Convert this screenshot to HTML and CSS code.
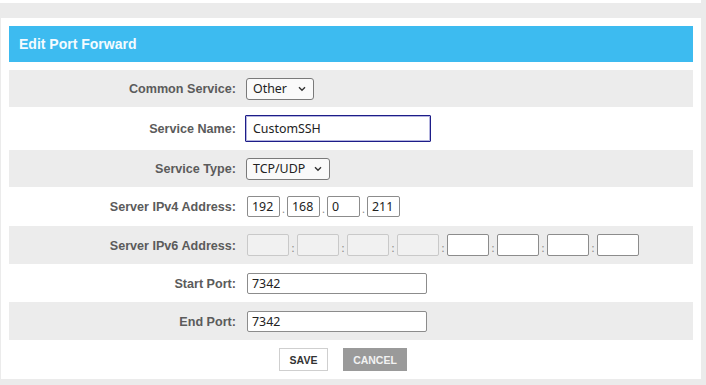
FILE: index.html
```html
<!DOCTYPE html>
<html lang="en">
<head>
<meta charset="utf-8">
<title>Edit Port Forward</title>
<link rel="stylesheet" href="styles.css">
</head>
<body>
<div class="top-card"></div>
<div class="card">
  <div class="card-header">Edit Port Forward</div>
  <div class="form">
    <div class="row gray h37">
      <div class="label">Common Service:</div>
      <div class="control">
        <div class="select w68"><span>Other</span>
          <svg class="chev" width="8" height="6" viewBox="0 0 8 6"><path d="M1 1.2 L4 4.2 L7 1.2" fill="none" stroke="#333" stroke-width="1.4"/></svg>
        </div>
      </div>
    </div>
    <div class="row h43">
      <div class="label">Service Name:</div>
      <div class="control"><input class="text focus" type="text" value="CustomSSH"></div>
    </div>
    <div class="row gray h37">
      <div class="label">Service Type:</div>
      <div class="control">
        <div class="select w83"><span>TCP/UDP</span>
          <svg class="chev" width="8" height="6" viewBox="0 0 8 6"><path d="M1 1.2 L4 4.2 L7 1.2" fill="none" stroke="#333" stroke-width="1.4"/></svg>
        </div>
      </div>
    </div>
    <div class="row h39">
      <div class="label">Server IPv4 Address:</div>
      <div class="control ip">
        <input class="oct" type="text" value="192"><span class="sep">.</span>
        <input class="oct" type="text" value="168"><span class="sep">.</span>
        <input class="oct" type="text" value="0"><span class="sep">.</span>
        <input class="oct" type="text" value="211">
      </div>
    </div>
    <div class="row gray h38">
      <div class="label">Server IPv6 Address:</div>
      <div class="control ip">
        <input class="hex" type="text" disabled><span class="sep">:</span>
        <input class="hex" type="text" disabled><span class="sep">:</span>
        <input class="hex" type="text" disabled><span class="sep">:</span>
        <input class="hex" type="text" disabled><span class="sep">:</span>
        <input class="hex" type="text"><span class="sep">:</span>
        <input class="hex" type="text"><span class="sep">:</span>
        <input class="hex" type="text"><span class="sep">:</span>
        <input class="hex" type="text">
      </div>
    </div>
    <div class="row h38">
      <div class="label">Start Port:</div>
      <div class="control"><input class="port" type="text" value="7342"></div>
    </div>
    <div class="row gray h38">
      <div class="label">End Port:</div>
      <div class="control"><input class="port" type="text" value="7342"></div>
    </div>
  </div>
  <div class="actions">
    <button class="btn save" type="button">SAVE</button>
    <button class="btn cancel" type="button">CANCEL</button>
  </div>
</div>
</body>
</html>
```
FILE: styles.css
```css
html, body {
  margin: 0;
  padding: 0;
}
body {
  background: #ebebeb;
  width: 706px;
  height: 385px;
  overflow: hidden;
  font-family: "Liberation Sans", Arial, sans-serif;
}
.top-card {
  width: 701px;
  height: 3px;
  background: #fff;
}
.card {
  margin: 15px 0 0 1px;
  width: 700px;
  box-sizing: border-box;
  background: #fff;
  padding: 8px 8px 8px 8px;
}
.card-header {
  height: 36px;
  background: #3dbbf0;
  color: #f4fbff;
  font-weight: bold;
  font-size: 14px;
  line-height: 36px;
  padding-left: 10px;
}
.form {
  margin-top: 8px;
}
.row {
  display: flex;
  align-items: center;
}
.row.gray { background: #ececec; }
.h37 { height: 37px; }
.h38 { height: 38px; }
.h39 { height: 39px; }
.h43 { height: 43px; }
.label {
  width: 227px;
  text-align: right;
  font-weight: bold;
  font-size: 12.6px;
  color: #5b5b5b;
  margin-right: 11px;
  padding-top: 1px;
}
.control {
  display: flex;
  align-items: center;
  font-family: "Noto Sans", "Open Sans", sans-serif;
  font-size: 12.4px;
  color: #222;
}
.select {
  box-sizing: border-box;
  height: 22px;
  border: 1px solid #7a7a7a;
  border-radius: 3px;
  background: #fafafa;
  display: flex;
  align-items: center;
  justify-content: space-between;
  padding: 0 7px 0 6px;
  margin-left: -1px;
}
.w68 { width: 68px; }
.w83 { width: 84px; }
.chev { display: block; }
input {
  font-family: "Noto Sans", "Open Sans", sans-serif;
  font-size: 12.4px;
  color: #222;
  box-sizing: border-box;
  margin: 0;
  outline: none;
  background: #fff;
}
.text {
  width: 186px;
  height: 27px;
  padding: 0 7px;
  margin-left: -2px;
  border: 1px solid #1d1d88;
  box-shadow: inset 0 0 0 1px rgba(40, 40, 160, 0.35);
  border-radius: 1px;
}
.oct {
  width: 33px;
  height: 21px;
  padding: 0 4px;
  border: 1px solid #8c8c8c;
  border-radius: 2px;
}
.ip .oct + .sep { width: 7px; }
.hex {
  width: 42px;
  height: 22px;
  padding: 0 4px;
  border: 1px solid #8c8c8c;
  border-radius: 2px;
}
.hex:disabled {
  background: #f1f1f1;
  border-color: #c9c9c9;
}
.sep {
  width: 8px;
  text-align: center;
  font-size: 11px;
  color: #888;
  align-self: flex-end;
  line-height: 16px;
}
.port {
  width: 180px;
  height: 21px;
  padding: 0 4px;
  border: 1px solid #8c8c8c;
  border-radius: 2px;
}
.actions {
  display: flex;
  gap: 15px;
  padding: 8px 0 0 270px;
  height: 23px;
}
.btn {
  box-sizing: border-box;
  height: 23px;
  font-family: "Liberation Sans", Arial, sans-serif;
  font-weight: bold;
  font-size: 10.5px;
  padding: 0;
  margin: 0;
  cursor: pointer;
}
.save {
  width: 49px;
  background: #fff;
  color: #333;
  border: 1px solid #cfcfcf;
}
.cancel {
  width: 64px;
  background: #9a9a9a;
  color: #f2f2f2;
  border: 1px solid #9a9a9a;
}
```
